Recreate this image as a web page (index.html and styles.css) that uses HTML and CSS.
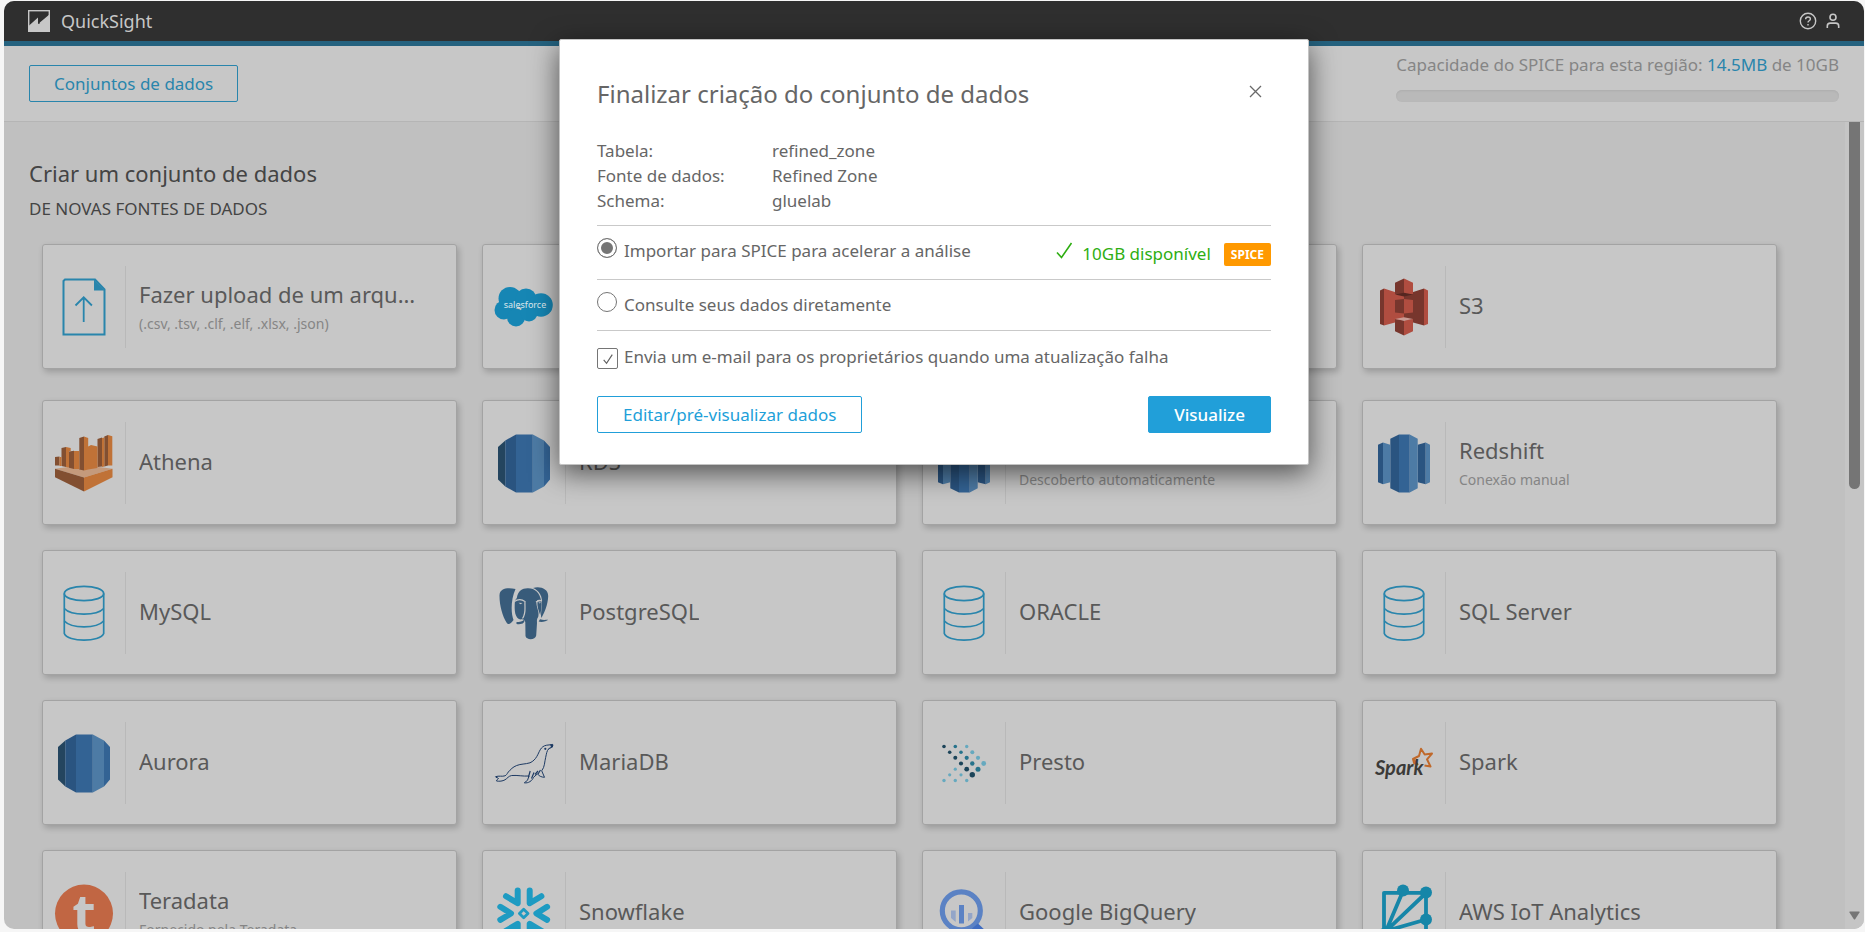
FILE: index.html
```html
<!DOCTYPE html>
<html lang="pt-BR">
<head>
<meta charset="utf-8">
<title>QuickSight</title>
<meta name="viewport" content="width=device-width, initial-scale=1">
<link rel="stylesheet" href="styles.css">
</head>
<body>
<svg class="defs" aria-hidden="true">
  <symbol id="database" viewBox="0 0 60 64">
    <g fill="none" stroke="#2985ac" stroke-width="1.7">
      <ellipse cx="30" cy="12.5" rx="19.7" ry="7.2"/>
      <path d="M10.3 12.5V52.5C12 57 21 59.2 30 59.2S48 57 49.700 52.500V12.500"/>
      <path d="M10.300 27.500C14 31.500 22 33.200 30 33.200S46 31.500 49.700 27.500M10.300 40C14 44 22 45.800 30 45.800S46 44 49.700 40"/>
    </g>
  </symbol>
  <symbol id="rds" viewBox="0 0 60 64">
    <path fill="#24455f" d="M4 16l7.300-6.500v46L4 48.500z"/>
    <path fill="#2a5480" d="M11.300 9.500L22 3.500v58l-10.700-6z"/>
    <path fill="#336394" d="M22 3.500h16.800v58H22zM50 9.500l6 6.500v32.500l-6 7z"/>
    <path fill="#4d7ba5" d="M38.800 3.500L50 9.500v46l-11.200 6z"/>
  </symbol>
  <symbol id="redshift" viewBox="0 0 60 64">
    <path fill="#2a5480" d="M4 13.800l5-2.300v41.700l-5-2zM43.700 13.800l8-2.300v41.700l-8-2zM16.300 7.800L25 3.500v58l-8.700-4.300z"/>
    <path fill="#4d7ba5" d="M9 11.500l7.300 2.300v37.400L9 53.200zM51.700 11.500l4.300 2.300v37.400l-4.300 2zM35.700 3.500l8 4.300v49.400l-8 4.300z"/>
    <path fill="#336394" d="M25 3.500h10.700v58H25z"/>
  </symbol>
</svg>

<div class="app">
  <header class="topbar">
    <svg class="topbar-logo" viewBox="0 0 22 22" aria-hidden="true">
      <rect x=".7" y=".7" width="20.600" height="20.600" fill="none" stroke="#c7c7c7" stroke-width="1.400"/>
      <path fill="#c7c7c7" d="M0 16.500L10 7.500v6.500L22 4v18H0z"/>
      <path stroke="#2f2f2f" stroke-width="1" d="M11 7v7"/>
    </svg>
    <span class="topbar-name">QuickSight</span>
    <nav class="topbar-actions">
      <button class="icon-button" type="button" aria-label="Ajuda">
        <svg width="18" height="18" viewBox="0 0 18 18" fill="none" stroke="#c7c7c7" stroke-width="1.400"><circle cx="9" cy="9" r="7.700"/><path d="M6.600 7.300C6.600 5.800 7.600 5 9 5s2.400.8 2.400 2.100c0 1.600-2.400 1.700-2.400 3.300M9 12v1.500"/></svg>
      </button>
      <button class="icon-button" type="button" aria-label="Conta">
        <svg width="16" height="18" viewBox="0 0 16 18" fill="none" stroke="#c7c7c7" stroke-width="1.600"><circle cx="8" cy="5.300" r="3"/><path d="M2.300 16v-2c0-2 1.200-2.900 3-2.900h5.400c1.800 0 3 .9 3 2.900v2"/></svg>
      </button>
    </nav>
  </header>

  <div class="toolbar">
    <button class="button button-muted" type="button">Conjuntos de dados</button>
    <div class="capacity">
      <div>Capacidade do SPICE para esta região: <span class="capacity-used">14.5MB</span> de 10GB</div>
      <div class="capacity-bar"></div>
    </div>
  </div>

  <div class="body">
    <main class="content">
      <h1 class="page-title">Criar um conjunto de dados</h1>
      <h2 class="section-title">DE NOVAS FONTES DE DADOS</h2>

      <div class="grid">
        <button class="card" type="button">
          <span class="card-icon"><svg viewBox="0 0 60 64" fill="none" stroke="#2985ac" stroke-width="2"><path d="M11 4.500h30l9.500 10V59.500h-41V6z"/><path fill="#2985ac" stroke="none" d="M40 4.500l10.500 11H40z"/><path stroke-width="1.800" d="M29.700 47V22.500M21.500 30.500l8.200-8.200 8.200 8.200"/></svg></span>
          <span class="card-text"><span class="card-title">Fazer upload de um arquivo</span><span class="card-note">(.csv, .tsv, .clf, .elf, .xlsx, .json)</span></span>
        </button>
        <button class="card" type="button">
          <span class="card-icon"><svg viewBox="0 0 60 64"><g fill="#1686b4"><circle cx="16" cy="23.500" r="11.500"/><circle cx="32" cy="24" r="10.500"/><circle cx="47" cy="30" r="11.800"/><circle cx="10" cy="35" r="9.500"/><circle cx="22" cy="42.500" r="9"/><circle cx="35" cy="38" r="8.500"/></g><text class="salesforce-word" x="31" y="33" text-anchor="middle">salesforce</text></svg></span>
          <span class="card-text"><span class="card-title">Salesforce</span></span>
        </button>
        <button class="card" type="button">
          <span class="card-icon"></span>
          <span class="card-text"><span class="card-title"></span></span>
        </button>
        <button class="card" type="button">
          <span class="card-icon"><svg viewBox="0 0 60 64"><path fill="#77362d" d="M6 15.500l4-2v37l-4-1.500zM50 13.500L30 20v25l20 5.500z"/><path fill="#b04d40" d="M10 13.500L30 20v25l-20 5.500zM50 13.500l4 2V49l-4 1.500z"/><path fill="#77362d" d="M21 7.800l9-4.300v17l-9-1.500zM21 25l9-1v14.500l-9-1zM21 44l9 1.500v15l-9-4.300z"/><path fill="#b04d40" d="M30 3.500l9 4.300V19l-9 1.500zM30 24l9 1v12.500l-9 1zM30 45.500l9-1.500v12.200l-9 4.300z"/><path fill="#552620" d="M21 19.500l9-1.700 9 1.700-9 2z"/><path fill="#c99a93" d="M21 44l9-1.800 9 1.800-9 1.700z"/></svg></span>
          <span class="card-text"><span class="card-title">S3</span></span>
        </button>
      </div>

      <div class="grid">
        <button class="card" type="button">
          <span class="card-icon"><svg viewBox="0 0 60 64">
            <path fill="#c49a7c" d="M1 37.800l13-1.800 16 2.500L45 36l13.500 1.800L30 46.500z"/>
            <path fill="#824f31" d="M1 37.800l29 8.700v14L1 46.200z"/><path fill="#c07237" d="M58.500 37.800L30 46.500v14l28.500-14.300z"/>
            <path fill="#824f31" d="M1 26l4.500-.5v9L1 34.500zM7.500 17l4.500-1v20l-4.500-1zM15 20.500l5-.7V38l-5-1.200zM25.300 7l4.700-1.500v34l-4.700-1zM43.500 8l4.500-1.500v29L43.500 36zM50.300 5.500L54 4v30.500l-3.700 1z"/>
            <path fill="#c07237" d="M5.500 26h2v9h-2zM12 16l4.700 1v3H15v16.500l-3-.5zM20 20l5.300 0v18l-5.300 0zM30 5.500L34.200 7v31.500l-4.200 1zM34.200 15.500L37 14l6.500 1.500V37l-9.300 1.500zM48 7l2.300-.5v29l-2.300.5zM54 4l4.300 1.300v29.200H54z"/>
          </svg></span>
          <span class="card-text"><span class="card-title">Athena</span></span>
        </button>
        <button class="card" type="button">
          <span class="card-icon"><svg><use href="#rds"/></svg></span>
          <span class="card-text"><span class="card-title">RDS</span></span>
        </button>
        <button class="card" type="button">
          <span class="card-icon"><svg><use href="#redshift"/></svg></span>
          <span class="card-text"><span class="card-title">Redshift</span><span class="card-note">Descoberto automaticamente</span></span>
        </button>
        <button class="card" type="button">
          <span class="card-icon"><svg><use href="#redshift"/></svg></span>
          <span class="card-text"><span class="card-title">Redshift</span><span class="card-note">Conexão manual</span></span>
        </button>
        <button class="card" type="button">
          <span class="card-icon"><svg><use href="#database"/></svg></span>
          <span class="card-text"><span class="card-title">MySQL</span></span>
        </button>
        <button class="card" type="button">
          <span class="card-icon"><svg viewBox="0 0 60 64">
            <g fill="#385b7a">
              <path d="M21.500 8C14 6.300 6 7 5.500 14c-.2 10 3 21 7 27.500 2 3 4 1.500 7-2.500-2.500-6-3-20 2-31z"/>
              <path d="M22.800 17C24 10 28 7.300 33.500 7.300 41 7 45.500 12 47 19c-4-1-5 1-4.500 4 .5 5 3 8 1.700 13-1.700 2-1.200 4-1.200 6l-.8 12.500c-.5 4.500-9.800 5-10.700.500L31.300 41c-.8-3-3-3-5-2.500C21 37 20 30 21 19.500z"/>
              <path d="M39 7c7-2 15 .5 15.200 8C54 24 50 32.500 47.300 37 46 31 50.500 20 46 13c-1.500-2.700-4-4.700-7-6z"/>
              <path d="M43.500 20.500l4-.5c.5 5-.5 10-1.300 14-1.500-4-3.300-9-2.700-13.500z"/>
              <path d="M22.500 41c3 0 6.500-.5 7.700-2.500 1.300 3-2 5.500-7.700 4.500zM46 38.300c3 1 5 .6 8.200.5-1.500 1.700-7 2.700-9.500 1.700z"/>
            </g>
            <path fill="none" stroke="#c7c7c7" stroke-width="1.200" d="M20.500 20.500c3-2.500 7.500-2.500 10-.2M31 20c-.5 7 1.500 12-2.500 17.500M42 21c2-1.500 4-1.800 6-1"/>
            <path fill="#c7c7c7" d="M24.500 21.700l4 .2-2 1.300zM44.300 21.500l2.700-.3-1.200 1.300z"/>
          </svg></span>
          <span class="card-text"><span class="card-title">PostgreSQL</span></span>
        </button>
        <button class="card" type="button">
          <span class="card-icon"><svg><use href="#database"/></svg></span>
          <span class="card-text"><span class="card-title">ORACLE</span></span>
        </button>
        <button class="card" type="button">
          <span class="card-icon"><svg><use href="#database"/></svg></span>
          <span class="card-text"><span class="card-title">SQL Server</span></span>
        </button>
        <button class="card" type="button">
          <span class="card-icon"><svg><use href="#rds"/></svg></span>
          <span class="card-text"><span class="card-title">Aurora</span></span>
        </button>
        <button class="card" type="button">
          <span class="card-icon"><svg viewBox="0 0 60 64">
            <path fill="none" stroke="#1d3a63" stroke-width="1" stroke-linejoin="round" d="M58.700 13.500l-6 .7c-3 .5-5 2-6.500 4.600C44 22.500 42.500 29 36 31.800c-5 1.500-9 1-13.300 2.700-4 1.500-6 4-8.400 6.500-1.300 2-2 3.300-3.300 3.800-3 1-6-.3-9.500.9 0 1 3 1 3 1.800-1 1-2 1.200-2 2.500 3 .5 6 .2 8.500-1.200 2.500-1.500 3.500-3.800 6.700-4.300 6-.5 11 1 17.300.5l-1.500 4.300-3.200 2.500c4 .7 8-2 9.200-5.500l4-3.500c1 2 4 3.500 7 3.500l-2.800-6.500c3.200-4 2.800-9 4-13.500.8-3.500 1-6.500 3-8.500 1.500-1 3.500-.5 4.300-4z"/>
            <path fill="none" stroke="#1d3a63" stroke-width="1.200" d="M34.500 46l1.700-6M37.500 47.500l2.500-6M41 43.500l3-3.500M44 43l2.500-4"/>
            <circle cx="51.300" cy="17.800" r="1.100" fill="#1d3a63"/><path fill="#1d3a63" d="M56 13.500h3v2.500l-1.500 1z"/><path stroke="#1d3a63" stroke-width=".7" fill="none" d="M54 18.500l3-2.500"/>
          </svg></span>
          <span class="card-text"><span class="card-title">MariaDB</span></span>
        </button>
        <button class="card" type="button">
          <span class="card-icon"><svg viewBox="0 0 60 64">
            <g fill="#1c4459"><circle cx="10" cy="15.500" r="1.800"/><circle cx="15.700" cy="21.200" r="1.800"/><circle cx="21.300" cy="26.800" r="2"/><circle cx="27" cy="32.500" r="2.100"/><circle cx="32.700" cy="38.200" r="2.400"/><circle cx="38.300" cy="43.800" r="2.700"/></g>
            <g fill="#26738c"><circle cx="21.300" cy="15.500" r="1.800"/><circle cx="27" cy="21.200" r="1.800"/><circle cx="32.700" cy="26.800" r="2.100"/><circle cx="38.300" cy="32.500" r="2.200"/><circle cx="44" cy="38.200" r="2.500"/></g>
            <g fill="#66a9bf"><circle cx="32.700" cy="15.500" r="1.700"/><circle cx="38.300" cy="21.200" r="2"/><circle cx="44" cy="26.800" r="2.100"/><circle cx="49.700" cy="32.500" r="2.400"/><circle cx="21.300" cy="38.200" r="1.600"/><circle cx="15.700" cy="43.800" r="1.600"/><circle cx="27" cy="43.800" r="1.600"/><circle cx="10" cy="49.500" r="1.700"/><circle cx="21.300" cy="49.500" r="1.700"/><circle cx="32.700" cy="49.500" r="1.700"/></g>
          </svg></span>
          <span class="card-text"><span class="card-title">Presto</span></span>
        </button>
        <button class="card" type="button">
          <span class="card-icon"><svg viewBox="0 0 60 64">
            <path fill="none" stroke="#c0692b" stroke-width="2" stroke-linejoin="round" d="M40.500 33.500l-1.500-5.500 0 0M44 34l-5-6 6-3 2-7.200 3.700 5.700 7.300-.9-5 5.700 3.500 7.200-6-1"/>
            <text class="spark-word" x="1" y="44">Spark</text>
          </svg></span>
          <span class="card-text"><span class="card-title">Spark</span></span>
        </button>
        <button class="card" type="button">
          <span class="card-icon"><svg viewBox="0 0 60 64"><circle cx="30" cy="32.500" r="29" fill="#c16643"/><text class="teradata-letter" x="30" y="52" text-anchor="middle">t</text></svg></span>
          <span class="card-text"><span class="card-title">Teradata</span><span class="card-note">Fornecido pela Teradata</span></span>
        </button>
        <button class="card" type="button">
          <span class="card-icon"><svg viewBox="0 0 60 64" fill="none" stroke="#1e9bc2" stroke-width="6" stroke-linecap="round" stroke-linejoin="round"><path d="M12 15.200l11.700 7V9.500M47.400 15.200l-11.700 7V9.500M6.300 25.800L17 32.500 6.300 38.800M53.100 25.800l-10.700 6.700 10.700 6.300M12 49.800l11.700-7v12.700M47.400 49.800l-11.700-7v12.700"/><path stroke-width="2.800" d="M29.700 28.200l4.300 4.300-4.300 4.300-4.300-4.300z"/></svg></span>
          <span class="card-text"><span class="card-title">Snowflake</span></span>
        </button>
        <button class="card" type="button">
          <span class="card-icon"><svg viewBox="0 0 60 64"><circle cx="27.300" cy="29.800" r="19" fill="none" stroke="#5b82c4" stroke-width="5.200"/><path fill="#5b82c4" d="M25 24h5v18.500h-5z"/><path fill="#93a5c8" d="M17 29.500h4.700V41L17 37zM34 32h4.300v5L34 40.500z"/><path fill="#3f6cc0" d="M38 47.500l6-5L55 53l-6 6z"/></svg></span>
          <span class="card-text"><span class="card-title">Google BigQuery</span></span>
        </button>
        <button class="card" type="button">
          <span class="card-icon"><svg viewBox="0 0 60 64"><path fill="none" stroke="#1686a8" stroke-width="3.800" stroke-linejoin="round" d="M10 52V11.800h42V54H10zM12 50L29 10M12 50l40-38M12 50l40-11.500"/><g fill="#1686a8"><circle cx="29" cy="9.500" r="6"/><circle cx="52" cy="11.500" r="6"/><circle cx="52" cy="38.500" r="6"/><circle cx="10" cy="53" r="6"/></g></svg></span>
          <span class="card-text"><span class="card-title">AWS IoT Analytics</span></span>
        </button>
      </div>
    </main>
    <div class="scrollbar" aria-hidden="true">
      <div class="scrollbar-thumb"></div>
      <svg width="11" height="9" viewBox="0 0 11 9"><path fill="#757575" d="M1 .5h9q1 0 .500 1L6.300 8q-.8 1-1.600 0L.5 1.500Q0 .5 1 .5z"/></svg>
    </div>
  </div>

  <div class="overlay">
    <form class="dialog" role="dialog" aria-labelledby="dialog-title">
      <div class="dialog-head">
        <h2 class="dialog-title" id="dialog-title">Finalizar criação do conjunto de dados</h2>
        <button class="icon-button" type="button" aria-label="Fechar">
          <svg width="13" height="13" viewBox="0 0 13 13" stroke="#696969" stroke-width="1.300"><path d="M1 1l11 11M12 1L1 12"/></svg>
        </button>
      </div>
      <dl class="facts">
        <dt>Tabela:</dt><dd>refined_zone</dd>
        <dt>Fonte de dados:</dt><dd>Refined Zone</dd>
        <dt>Schema:</dt><dd>gluelab</dd>
      </dl>
      <div class="option">
        <input class="radio" type="radio" name="mode" id="mode-spice" checked>
        <label for="mode-spice">Importar para SPICE para acelerar a análise</label>
        <span class="available">
          <svg width="17" height="17" viewBox="0 0 17 17" fill="none" stroke="#2eae12" stroke-width="1.600"><path d="M1 10.500l4.500 5L15.500 1"/></svg>
          <span>10GB disponível</span>
          <span class="badge">SPICE</span>
        </span>
      </div>
      <div class="option">
        <input class="radio" type="radio" name="mode" id="mode-direct">
        <label for="mode-direct">Consulte seus dados diretamente</label>
      </div>
      <div class="notify">
        <span class="checkbox-wrap">
          <input class="checkbox" type="checkbox" id="notify" checked>
          <svg class="checkbox-mark" viewBox="0 0 22 22" fill="none" stroke="#606060" stroke-width="1.200"><path d="M7 12.500l3 3.500 6-9"/></svg>
        </span>
        <label for="notify">Envia um e-mail para os proprietários quando uma atualização falha</label>
      </div>
      <div class="dialog-actions">
        <button class="button" type="button">Editar/pré-visualizar dados</button>
        <button class="button button-primary" type="submit">Visualize</button>
      </div>
    </form>
  </div>
</div>
</body>
</html>
```
FILE: styles.css
```css
* {
  box-sizing: border-box;
}

body {
  margin: 0;
  background: #f6f6f6;
  color: #666;
  font: 17px/24px "Noto Sans", "Open Sans", sans-serif;
}

button {
  font: inherit;
  cursor: pointer;
}

h1, h2, dl, dd {
  margin: 0;
  font-weight: 400;
}

.defs {
  display: none;
}

.app {
  position: relative;
  display: flex;
  flex-direction: column;
  height: calc(100vh - 4px);
  margin: 1px 1px 3px 4px;
  overflow: hidden;
  border-radius: 10px;
  background: #c0c0c0;
}

/* Top bar */
.topbar {
  display: flex;
  flex: none;
  align-items: center;
  height: 45px;
  padding: 0 23px 0 24px;
  border-bottom: 5px solid #25627f;
  background: #2f2f2f;
  color: #c7c7c7;
}

.topbar-logo {
  width: 22px;
  height: 22px;
}

.topbar-name {
  margin-left: 11px;
  font-size: 18px;
}

.topbar-actions {
  display: flex;
  gap: 8px;
  margin-left: auto;
}

.icon-button {
  display: flex;
  padding: 0;
  border: 0;
  background: none;
}

/* Toolbar */
.toolbar {
  display: flex;
  flex: none;
  align-items: center;
  justify-content: space-between;
  height: 76px;
  padding: 0 25px;
  border-bottom: 1px solid #b5b5b5;
  background: #c7c7c7;
}

.button {
  padding: 6px 25px 5px;
  border: 1px solid #219fd9;
  border-radius: 2px;
  background: none;
  color: #219fd9;
}

.button-muted {
  padding: 6px 24px 5px;
  border-color: #2985ac;
  color: #2985ac;
}

.button-primary {
  background: #219fd9;
  color: #fff;
  font-weight: 500;
}

.capacity {
  padding-bottom: 12px;
  color: #858585;
}

.capacity-used {
  color: #2985ac;
}

.capacity-bar {
  height: 12px;
  margin-top: 13px;
  border-radius: 6px;
  background: #b9b9b9;
  box-shadow: inset 0 1px 2px #adadad;
}

/* Source list */
.body {
  display: flex;
  flex: 1;
  min-height: 0;
}

.content {
  flex: 1;
  min-width: 0;
  padding: 37px 68px 0 25px;
  overflow: hidden;
}

.page-title {
  color: #444;
  font-size: 22px;
  line-height: 28px;
}

.section-title {
  margin: 10px 0 23px;
  color: #444;
  font-size: 17px;
}

.grid {
  display: grid;
  grid-template-columns: repeat(4, minmax(0, 1fr));
  gap: 25px;
  margin: 0 0 31px 13px;
}

.card {
  display: flex;
  align-items: center;
  height: 125px;
  padding: 0;
  border: 1px solid #a3a3a3;
  border-radius: 3px;
  background: #c7c7c7;
  box-shadow: 2px 3px 6px rgba(0, 0, 0, .2);
  text-align: left;
}

.card-icon {
  display: flex;
  flex: none;
  align-items: center;
  justify-content: center;
  width: 83px;
  height: 82px;
  border-right: 1px solid #b9b9b9;
}

.card-icon svg {
  width: 60px;
  height: 64px;
}

.card-text {
  display: flex;
  flex-direction: column;
  gap: 7px;
  min-width: 0;
  padding: 0 36px 3px 13px;
}

.card-title {
  overflow: hidden;
  color: #595959;
  font-size: 22px;
  line-height: 30px;
  text-overflow: ellipsis;
  white-space: nowrap;
}

.card-note {
  color: #858585;
  font-size: 14px;
  line-height: 16px;
}

.salesforce-word {
  fill: #dbe6ec;
  font-size: 9px;
}

.spark-word {
  fill: #3b3a38;
  font: italic 700 20px Lato, sans-serif;
}

.teradata-letter {
  fill: #c7c7c7;
  font-size: 54px;
  font-weight: 700;
}

.scrollbar {
  display: flex;
  flex: none;
  flex-direction: column;
  align-items: center;
  justify-content: space-between;
  width: 19px;
  padding-bottom: 9px;
  background: #c5c5c5;
}

.scrollbar-thumb {
  width: 11px;
  height: 367px;
  border-radius: 0 0 6px 6px;
  background: #757575;
}

/* Dialog */
.overlay {
  position: absolute;
  inset: 0;
  display: flex;
  align-items: flex-start;
  justify-content: center;
  padding-top: 38px;
}

.dialog {
  width: 750px;
  max-width: 100%;
  padding: 38px 37px 31px;
  border: 1px solid #c4c4c4;
  border-radius: 2px;
  background: #fff;
  box-shadow: 0 8px 28px rgba(0, 0, 0, .6);
}

.dialog-head {
  display: flex;
  align-items: flex-start;
  justify-content: space-between;
  padding-right: 9px;
}

.dialog-head .icon-button {
  padding-top: 7px;
}

.dialog-title {
  font-size: 24px;
  line-height: 32px;
}

.facts {
  display: grid;
  grid-template-columns: 175px 1fr;
  margin: 28px 0 12px;
  line-height: 25px;
}

.option,
.notify {
  display: flex;
  align-items: flex-start;
}

.option {
  padding: 12px 0 13px;
  border-top: 1px solid #c9c9c9;
}

.option label {
  margin: 1px 0 0 7px;
}

.radio {
  width: 20px;
  height: 20px;
  margin: 0;
  appearance: none;
  border: 1px solid #757575;
  border-radius: 50%;
  background: #fff;
}

.radio:checked {
  background: #757575;
  box-shadow: inset 0 0 0 3px #fff;
}

.available {
  display: flex;
  align-items: center;
  margin-left: auto;
  padding-top: 4px;
  color: #2eae12;
}

.available svg {
  margin: 0 9px 7px 0;
}

.badge {
  margin-left: 13px;
  padding: 0 7px;
  border-radius: 2px;
  background: #ff9900;
  color: #fff;
  font-size: 12px;
  font-weight: 700;
  line-height: 23px;
}

.notify {
  padding: 14px 0 27px;
  border-top: 1px solid #c9c9c9;
}

.notify label {
  margin-left: 6px;
}

.checkbox-wrap {
  position: relative;
  width: 21px;
  height: 21px;
  margin-top: 3px;
}

.checkbox {
  display: block;
  width: 100%;
  height: 100%;
  margin: 0;
  appearance: none;
  border: 1px solid #757575;
  border-radius: 2px;
  background: #fff;
}

.checkbox-mark {
  position: absolute;
  inset: 0;
  pointer-events: none;
}

.dialog-actions {
  display: flex;
  justify-content: space-between;
}
```
